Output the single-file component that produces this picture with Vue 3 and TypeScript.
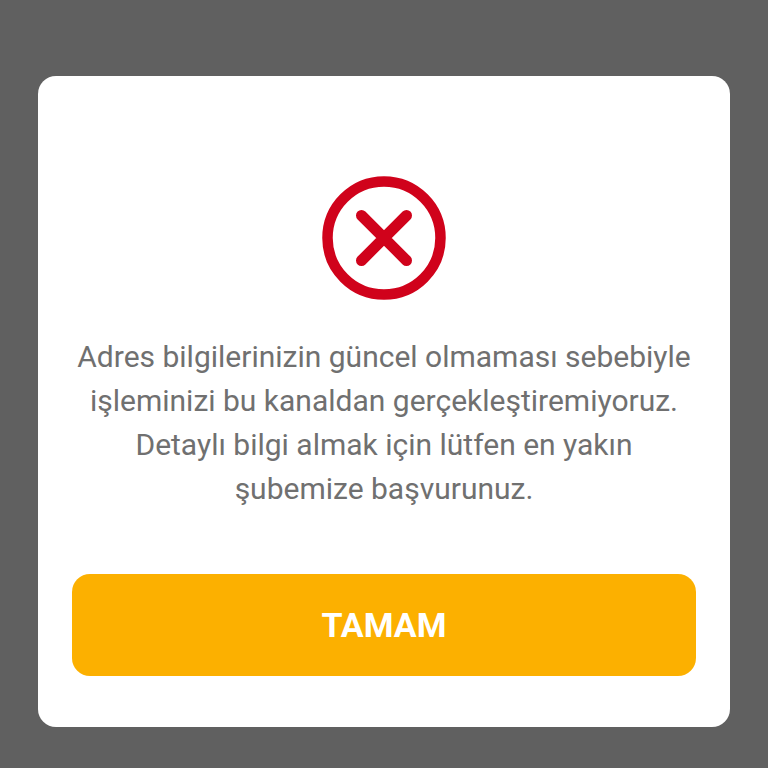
<script setup lang="ts">
import { ref } from 'vue'

const open = ref<boolean>(true)
const message: string =
  'Adres bilgilerinizin güncel olmaması sebebiyle işleminizi bu kanaldan gerçekleştiremiyoruz. Detaylı bilgi almak için lütfen en yakın şubemize başvurunuz.'
</script>

<template>
  <main class="backdrop">
    <section v-if="open" class="dialog" role="alertdialog" aria-modal="true" aria-describedby="message">
      <svg class="icon" viewBox="0 0 124 124" fill="none" aria-hidden="true">
        <circle cx="62" cy="62" r="56.5" stroke="currentColor" stroke-width="10.5" />
        <path d="M39.5 39.5 84.5 84.5M84.5 39.5 39.5 84.5" stroke="currentColor" stroke-width="11" stroke-linecap="round" />
      </svg>
      <p id="message" class="message">{{ message }}</p>
      <button class="confirm" type="button" @click="open = false">TAMAM</button>
    </section>
  </main>
</template>

<style>
body {
  background: #606060;
}
</style>

<style scoped>
.backdrop {
  box-sizing: border-box;
  min-height: 100vh;
  padding: 76px 38px 40px;
  font-family: Roboto, "Liberation Sans", sans-serif;
}

.dialog {
  box-sizing: border-box;
  display: flex;
  flex-direction: column;
  align-items: center;
  padding: 100px 34px 51px;
  border-radius: 18px;
  background: #fff;
}

.icon {
  width: 124px;
  height: 124px;
  color: #d0021b;
}

.message {
  margin: 35px 0 63px;
  color: #707070;
  font-size: 30px;
  line-height: 44px;
  text-align: center;
}

.confirm {
  width: 100%;
  height: 102px;
  padding: 0;
  border: 0;
  border-radius: 18px;
  background: #fcb000;
  color: #fff;
  font-family: inherit;
  font-size: 34px;
  font-weight: 700;
  cursor: pointer;
}
</style>
